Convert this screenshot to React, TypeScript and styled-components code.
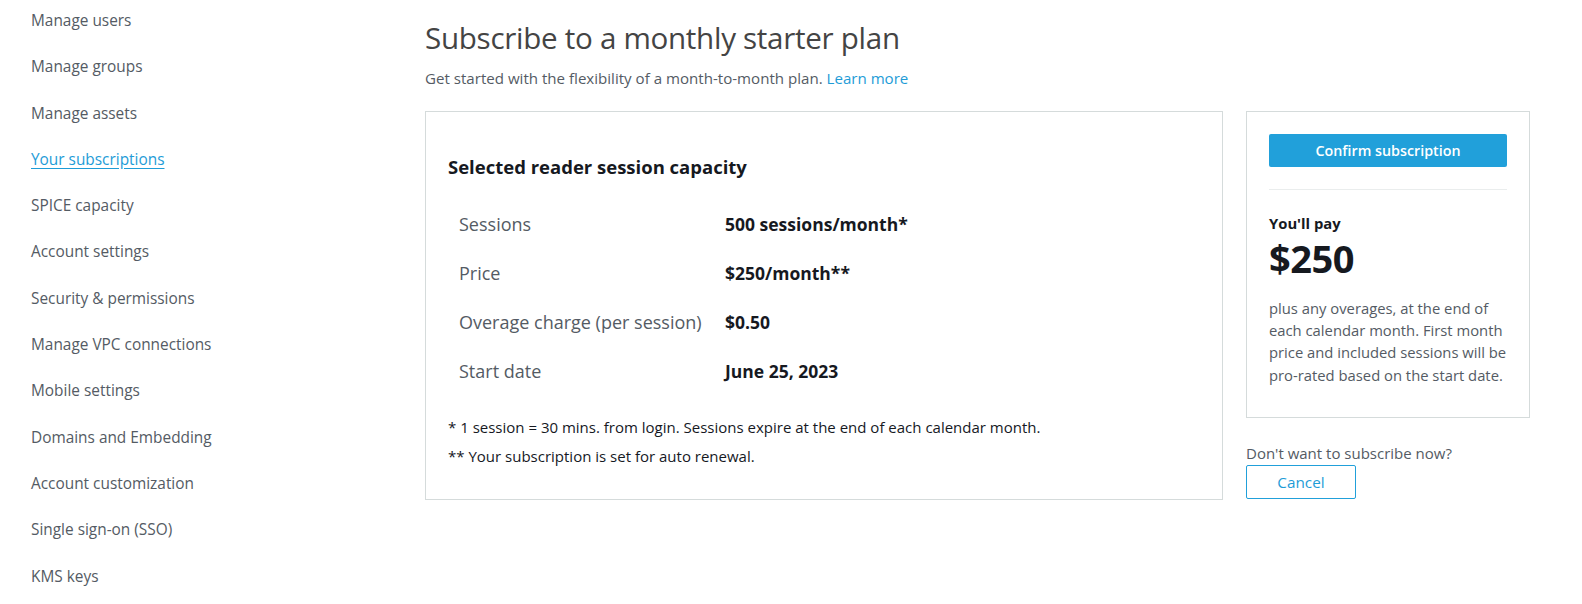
import React from "react";
import styled, { createGlobalStyle } from "styled-components";

const Global = createGlobalStyle`
  html, body { margin: 0; padding: 0; background: #fff; }
  body { font-family: "Open Sans", "Noto Sans", Arial, sans-serif; -webkit-font-smoothing: antialiased; }
  * { box-sizing: border-box; }
`;

const Page = styled.div`
  display: flex;
  align-items: flex-start;
  width: 1582px;
  height: 604px;
  overflow: hidden;
`;

const Sidebar = styled.nav`
  width: 425px;
  flex: none;
  display: flex;
  flex-direction: column;
  gap: 26.3px;
  padding: 11px 0 0 31px;
`;

const NavItem = styled.a<{ $active?: boolean }>`
  font-size: 15.4px;
  line-height: 20px;
  color: ${(p) => (p.$active ? "#1e9cd7" : "#545b64")};
  text-decoration: ${(p) => (p.$active ? "underline" : "none")};
  text-underline-offset: 3px;
  cursor: pointer;
`;

const Main = styled.main`
  flex: none;
  width: 1106px;
  padding-top: 20px;
`;

const Title = styled.h1`
  margin: 0;
  font-size: 29.6px;
  line-height: 36px;
  font-weight: 400;
  color: #444;
  letter-spacing: -0.3px;
`;

const Subtitle = styled.p`
  margin: 12px 0 0;
  font-size: 15.1px;
  line-height: 20px;
  color: #545b64;
`;

const Link = styled.a`
  color: #1e9cd7;
  text-decoration: none;
`;

const Columns = styled.div`
  display: flex;
  align-items: flex-start;
  gap: 23px;
  margin-top: 23px;
`;

const Card = styled.section`
  width: 798px;
  height: 389px;
  border: 1px solid #d5dbdb;
  padding: 43px 22px 0;
`;

const CardHeading = styled.h2`
  margin: 0;
  font-size: 18.5px;
  line-height: 24px;
  font-weight: 700;
  color: #16191f;
`;

const Rows = styled.div`
  display: grid;
  grid-template-columns: 266px 1fr;
  row-gap: 25px;
  margin-top: 33px;
  padding-left: 11px;
`;

const Label = styled.div`
  font-size: 18px;
  line-height: 24px;
  color: #545b64;
  white-space: nowrap;
`;

const Value = styled.div`
  font-size: 17.5px;
  line-height: 24px;
  font-weight: 700;
  color: #16191f;
`;

const Notes = styled.div`
  margin-top: 34px;
  display: flex;
  flex-direction: column;
  gap: 9px;
`;

const Note = styled.p`
  margin: 0;
  font-size: 15px;
  line-height: 20px;
  color: #16191f;
`;

const Side = styled.aside`
  width: 284px;
  display: flex;
  flex-direction: column;
`;

const PayCard = styled.div`
  border: 1px solid #d5dbdb;
  padding: 22px 22px 0;
  height: 307px;
`;

const PrimaryButton = styled.button`
  width: 100%;
  height: 33px;
  border: none;
  border-radius: 2px;
  background: #21a0da;
  color: #fff;
  font-family: inherit;
  font-size: 14.3px;
  font-weight: 600;
  cursor: pointer;
`;

const Divider = styled.hr`
  border: none;
  border-top: 1px solid #eaeded;
  margin: 22px 0 0;
`;

const PayLabel = styled.div`
  margin-top: 23px;
  font-size: 14.8px;
  line-height: 20px;
  font-weight: 700;
  color: #16191f;
`;

const Amount = styled.div`
  margin-top: 3px;
  font-size: 38px;
  line-height: 44px;
  font-weight: 700;
  color: #16191f;
  letter-spacing: -0.5px;
`;

const PayText = styled.p`
  margin: 17px -8px 0 0;
  font-size: 14.8px;
  line-height: 22.2px;
  color: #545b64;
`;

const Question = styled.p`
  margin: 25px 0 0;
  font-size: 15px;
  line-height: 20px;
  color: #545b64;
`;

const SecondaryButton = styled.button`
  margin-top: 2px;
  width: 110px;
  height: 34px;
  border: 1px solid #21a0da;
  border-radius: 2px;
  background: #fff;
  color: #1e9cd7;
  font-family: inherit;
  font-size: 15.3px;
  cursor: pointer;
`;

const navItems = [
  "Manage users",
  "Manage groups",
  "Manage assets",
  "Your subscriptions",
  "SPICE capacity",
  "Account settings",
  "Security & permissions",
  "Manage VPC connections",
  "Mobile settings",
  "Domains and Embedding",
  "Account customization",
  "Single sign-on (SSO)",
  "KMS keys",
];

const rows: [string, string][] = [
  ["Sessions", "500 sessions/month*"],
  ["Price", "$250/month**"],
  ["Overage charge (per session)", "$0.50"],
  ["Start date", "June 25, 2023"],
];

export default function App() {
  return (
    <>
      <Global />
      <Page>
        <Sidebar>
          {navItems.map((n) => (
            <NavItem key={n} $active={n === "Your subscriptions"}>
              {n}
            </NavItem>
          ))}
        </Sidebar>
        <Main>
          <Title>Subscribe to a monthly starter plan</Title>
          <Subtitle>
            Get started with the flexibility of a month-to-month plan. <Link>Learn more</Link>
          </Subtitle>
          <Columns>
            <Card>
              <CardHeading>Selected reader session capacity</CardHeading>
              <Rows>
                {rows.map(([l, v]) => (
                  <React.Fragment key={l}>
                    <Label>{l}</Label>
                    <Value>{v}</Value>
                  </React.Fragment>
                ))}
              </Rows>
              <Notes>
                <Note>* 1 session = 30 mins. from login. Sessions expire at the end of each calendar month.</Note>
                <Note>** Your subscription is set for auto renewal.</Note>
              </Notes>
            </Card>
            <Side>
              <PayCard>
                <PrimaryButton>Confirm subscription</PrimaryButton>
                <Divider />
                <PayLabel>You'll pay</PayLabel>
                <Amount>$250</Amount>
                <PayText>
                  plus any overages, at the end of each calendar month. First month price and included sessions will be pro-rated based on the start date.
                </PayText>
              </PayCard>
              <Question>Don't want to subscribe now?</Question>
              <SecondaryButton>Cancel</SecondaryButton>
            </Side>
          </Columns>
        </Main>
      </Page>
    </>
  );
}
